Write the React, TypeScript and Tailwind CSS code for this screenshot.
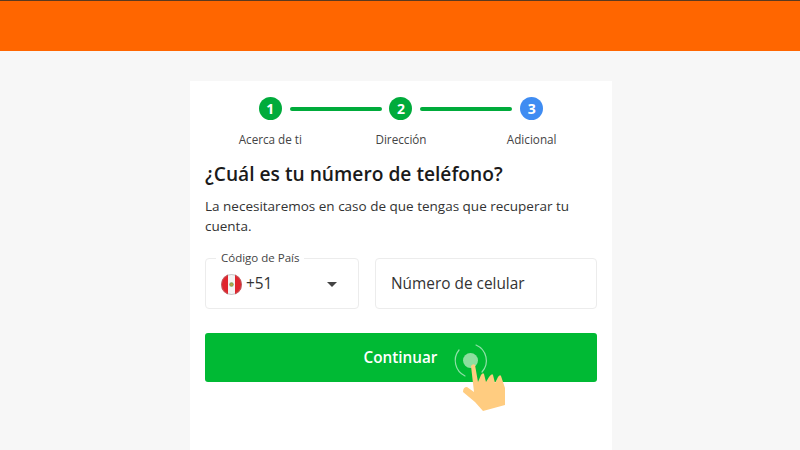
const STEPS = [
  { n: 1, label: 'Acerca de ti', color: 'bg-[#00ab3b]' },
  { n: 2, label: 'Dirección', color: 'bg-[#00ab3b]' },
  { n: 3, label: 'Adicional', color: 'bg-[#3f8cf2]' },
];

function PeruFlag() {
  return (
    <svg width="21" height="21" viewBox="0 0 21 21" className="shrink-0">
      <defs>
        <clipPath id="flag">
          <circle cx="10.5" cy="10.5" r="10.5" />
        </clipPath>
      </defs>
      <g clipPath="url(#flag)">
        <rect width="21" height="21" fill="#f4f4f4" />
        <rect width="7" height="21" fill="#e0242c" />
        <rect x="14" width="7" height="21" fill="#e0242c" />
        <circle cx="10.5" cy="10.5" r="2.2" fill="#7ea55a" />
        <rect x="9.4" y="9.6" width="2.2" height="2" fill="#c9a23f" />
      </g>
      <circle cx="10.5" cy="10.5" r="10" fill="none" stroke="#9a9a9a" strokeOpacity="0.5" />
    </svg>
  );
}

function TapHand() {
  return (
    <svg width="64" height="76" viewBox="0 0 64 76" className="absolute left-[447px] top-[342px]">
      <path d="M12 8 A 17 17 0 0 0 18 34" fill="none" stroke="#8fe0a8" strokeWidth="1.2" strokeLinecap="round" />
      <path d="M29 3 A 17 17 0 0 1 35 30" fill="none" stroke="#8fe0a8" strokeWidth="1.2" strokeLinecap="round" />
      <circle cx="23.5" cy="18.5" r="7.500" fill="#8cdf9f" />
      <path
        d="M24 24 Q26 21 28 23 L31 40 L34 33 Q36 30 37 32 L39 40 L42 35 Q45 31 46 33 L48 41 L51 35 Q53 32 54 34 L58 46 L58 63 L36 69 L28 60 L16 50 Q16 45 20 45 L27 50 Z"
        fill="#ffcc80"
      />
    </svg>
  );
}

export default function App() {
  return (
    <div className="relative h-[450px] w-[800px] overflow-hidden bg-[#f7f7f7] font-['Open_Sans',sans-serif]">
      <div className="h-[51px] border-t border-[#5a3a20] bg-[#ff6600]" />

      <div className="ml-[190px] mt-[30px] h-[369px] w-[422px] bg-white px-[15px] pt-[16px]">
        {/* Stepper */}
        <div className="relative grid grid-cols-3">
          {STEPS.map((step) => (
            <div key={step.n} className="flex flex-col items-center">
              <div className={`flex h-[23px] w-[23px] items-center justify-center rounded-full text-[14px] font-bold leading-none text-white ${step.color}`}>
                {step.n}
              </div>
              <p className="mt-[10px] text-[11.7px] leading-[18px] text-[#444]">{step.label}</p>
            </div>
          ))}
          <div className="absolute left-[85px] top-[10px] h-[4px] w-[92px] rounded-full bg-[#00ab3b]" />
          <div className="absolute left-[215px] top-[10px] h-[4px] w-[92px] rounded-full bg-[#00ab3b]" />
        </div>

        <h1 className="mt-[13px] text-[19.2px] font-semibold leading-[26px] text-[#1a1a1a]">¿Cuál es tu número de teléfono?</h1>
        <p className="mt-[9px] text-[13.5px] leading-[20px] text-[#333]">
          La necesitaremos en caso de que tengas que recuperar tu cuenta.
        </p>

        {/* Phone */}
        <div className="mt-[22px] flex gap-[16px]">
          <div className="relative flex h-[51px] w-[154px] items-center rounded border border-[#ececec] pl-[15px] pr-[21px] pt-px">
            <span className="absolute left-[10px] top-[-9px] bg-white px-[5px] text-[11.5px] leading-[16px] text-[#444]">Código de País</span>
            <PeruFlag />
            <span className="ml-[4px] text-[15.4px] text-[#333]">+51</span>
            <span className="ml-auto h-0 w-0 border-x-[5px] border-t-[5px] border-x-transparent border-t-[#444]" />
          </div>
          <div className="flex h-[51px] flex-1 items-center rounded border border-[#ececec] px-[15px] pt-px text-[15.4px] text-[#333]">
            Número de celular
          </div>
        </div>

        <button className="mt-[24px] flex h-[49px] w-full items-center justify-center rounded-[3px] bg-[#00ba34] pr-px text-[15.3px] font-semibold text-white">
          Continuar
        </button>
      </div>

      <TapHand />
    </div>
  );
}
